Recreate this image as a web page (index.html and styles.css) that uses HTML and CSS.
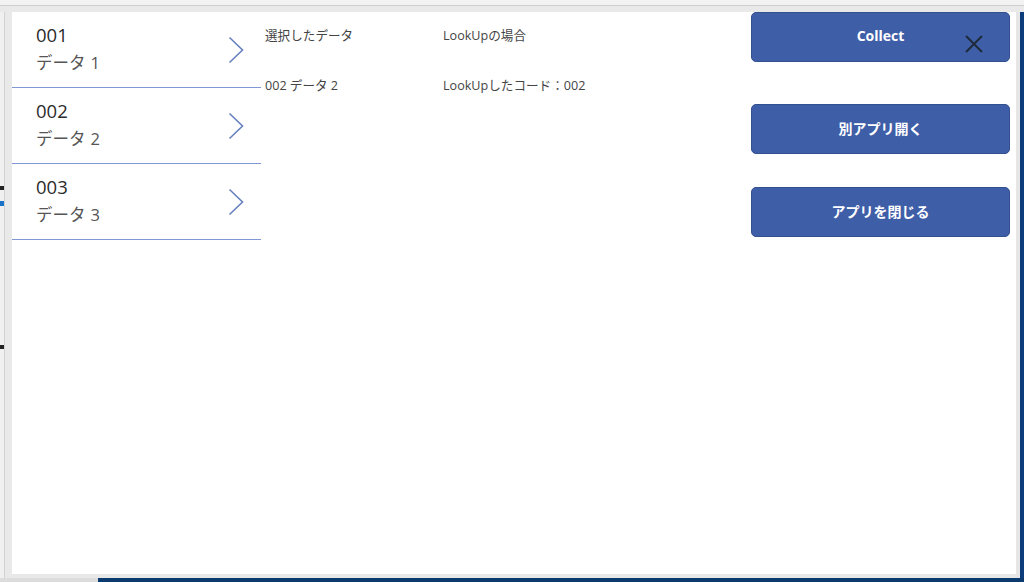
FILE: index.html
```html
<!DOCTYPE html>
<html lang="ja">
<head>
<meta charset="utf-8">
<link rel="stylesheet" href="styles.css">
<title>App</title>
</head>
<body>
<div class="topbar"></div>
<div class="main">
  <div class="left-edge">
    <span class="mark mark-a"></span>
    <span class="mark mark-b"></span>
    <span class="mark mark-c"></span>
  </div>
  <div class="canvas">
    <ul class="gallery">
      <li class="item">
        <div class="item-text">
          <div class="item-title">001</div>
          <div class="item-sub">データ<span class="num">1</span></div>
        </div>
        <svg class="chev" viewBox="0 0 16 28" width="16" height="28"><path d="M1.5 1.5 L14.5 14 L1.5 26.5" fill="none" stroke="#6680bf" stroke-width="1.6"/></svg>
      </li>
      <li class="item">
        <div class="item-text">
          <div class="item-title">002</div>
          <div class="item-sub">データ<span class="num">2</span></div>
        </div>
        <svg class="chev" viewBox="0 0 16 28" width="16" height="28"><path d="M1.5 1.5 L14.5 14 L1.5 26.5" fill="none" stroke="#6680bf" stroke-width="1.6"/></svg>
      </li>
      <li class="item">
        <div class="item-text">
          <div class="item-title">003</div>
          <div class="item-sub">データ<span class="num">3</span></div>
        </div>
        <svg class="chev" viewBox="0 0 16 28" width="16" height="28"><path d="M1.5 1.5 L14.5 14 L1.5 26.5" fill="none" stroke="#6680bf" stroke-width="1.6"/></svg>
      </li>
    </ul>
    <div class="labels">
      <div class="lab-col col-a">
        <div class="lab">選択したデータ</div>
        <div class="lab">002 データ<span class="num-s">2</span></div>
      </div>
      <div class="lab-col col-b">
        <div class="lab">LookUpの場合</div>
        <div class="lab">LookUpしたコード：002</div>
      </div>
    </div>
    <div class="buttons">
      <button class="btn btn-1">Collect</button>
      <button class="btn btn-2">別アプリ開く</button>
      <button class="btn btn-3">アプリを閉じる</button>
      <svg class="close" viewBox="0 0 20 20" width="20" height="20"><path d="M2 2 L18 18 M18 2 L2 18" stroke="#1e2b3a" stroke-width="2" fill="none"/></svg>
    </div>
  </div>
  <div class="right-edge"></div>
</div>
<div class="taskbar"><div class="task-gray"></div><div class="task-blue"></div></div>
</body>
</html>
```
FILE: styles.css
```css
* { box-sizing: border-box; }
html, body { margin: 0; padding: 0; }
body {
  width: 1024px;
  height: 582px;
  overflow: hidden;
  background: #e8e8e8;
  font-family: "Open Sans", "Noto Sans CJK JP", sans-serif;
  display: flex;
  flex-direction: column;
}
.topbar {
  height: 12px;
  background: linear-gradient(#f2f2f2 0, #f2f2f2 5px, #cfcfcf 5px, #cfcfcf 6px, #e9e9e9 6px);
  flex: none;
}
.main {
  display: flex;
  height: 566px;
  flex: none;
}
.left-edge {
  width: 12px;
  position: relative;
  background: linear-gradient(90deg, #f0f0f0 0, #f0f0f0 4px, #d2d2d2 4px, #d2d2d2 5px, #e9e9e9 5px);
}
.mark { position: absolute; left: 0; width: 4px; height: 4px; }
.mark-a { top: 174px; background: #222; }
.mark-b { top: 189px; height: 5px; background: #1a73c8; }
.mark-c { top: 333px; background: #222; }
.canvas {
  width: 1004px;
  height: 562px;
  background: #fff;
  display: flex;
  position: relative;
}
.gallery {
  list-style: none;
  margin: 0;
  padding: 0;
  width: 249px;
  flex: none;
}
.item {
  height: 76px;
  border-bottom: 1px solid #7f97d3;
  display: flex;
  align-items: center;
  padding: 0 17px 0 24px;
}
.item-text { flex: 1; }
.item-title {
  font-size: 18.5px;
  line-height: 24px;
  color: #2b2b2b;
  margin-top: -1px;
}
.item-sub {
  font-size: 16.5px;
  line-height: 26px;
  color: #555;
  margin-top: 3px;
}
.num { margin-left: 5px; }
.num-s { margin-left: 3px; }
.chev { flex: none; }
.labels {
  display: flex;
  padding-left: 4px;
  flex: none;
  width: 490px;
}
.lab-col { display: flex; flex-direction: column; }
.col-a { width: 178px; }
.lab {
  font-size: 12.6px;
  color: #444;
  line-height: 16px;
  height: 50px;
  padding-top: 16px;
}
.buttons {
  display: flex;
  flex-direction: column;
  width: 259px;
  margin-left: auto;
  margin-right: 6px;
  position: relative;
}
.btn {
  height: 50px;
  width: 259px;
  border: 1px solid #33508f;
  border-radius: 5px;
  background: #3f5ea8;
  color: #fff;
  font-family: "Open Sans", "Noto Sans CJK JP", sans-serif;
  font-weight: 700;
  font-size: 14px;
  padding: 0 0 3px 0;
  cursor: pointer;
}
.btn-1 { padding-bottom: 4px; }
.btn-2 { margin-top: 42px; }
.btn-3 { margin-top: 33px; }
.close {
  position: absolute;
  left: 213px;
  top: 22px;
}
.right-edge {
  width: 8px;
  background: linear-gradient(90deg, #e6e6e6 0, #e6e6e6 4px, #0c3d7a 4px);
}
.taskbar {
  height: 4px;
  display: flex;
  flex: none;
}
.task-gray { width: 98px; background: #dcdcdc; }
.task-blue { flex: 1; background: #0b3a6e; }
```
